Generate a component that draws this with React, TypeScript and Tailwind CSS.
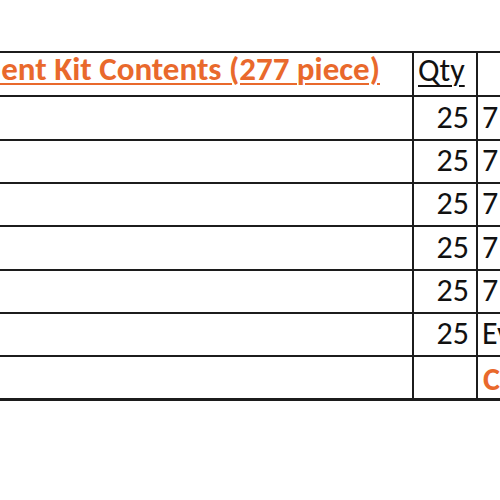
import React from 'react';

const rows = [
  { qty: '25', desc: '7', h: 'h-[44px]' },
  { qty: '25', desc: '7', h: 'h-[43px]' },
  { qty: '25', desc: '7', h: 'h-[43px]' },
  { qty: '25', desc: '7', h: 'h-[44px]' },
  { qty: '25', desc: '7', h: 'h-[43px]' },
  { qty: '25', desc: 'Ev', h: 'h-[43px]' },
];

const App = () => {
  return (
    <div className="w-[500px] h-[500px] bg-white overflow-hidden font-['Carlito','Lato',sans-serif] text-[32px] text-[#111]">
      <div className="mt-[51px] w-[560px] border-t-2 border-b-[3px] border-[#1c1c1c]">
        {/* header */}
        <div className="flex h-[44px] border-b-2 border-[#1c1c1c]">
          <div className="w-[414px] shrink-0 border-r-2 border-[#1c1c1c] flex items-end justify-end pr-[32px] pb-[9px] overflow-hidden">
            <span className="whitespace-nowrap text-[33px] font-bold text-[#e9692c] underline underline-offset-[3px] decoration-2 leading-none">
              Replacement Kit Contents (277 piece)
            </span>
          </div>
          <div className="w-[64px] shrink-0 border-r-2 border-[#1c1c1c] flex items-end pl-[4px] pb-[8px]">
            <span className="underline underline-offset-[4px] decoration-[1.5px] leading-none">Qty</span>
          </div>
          <div className="flex-1" />
        </div>

        {rows.map((row, i) => (
          <div key={i} className={`flex ${row.h} border-b-2 border-[#1c1c1c]`}>
            <div className="w-[414px] shrink-0 border-r-2 border-[#1c1c1c]" />
            <div className="w-[64px] shrink-0 border-r-2 border-[#1c1c1c] flex items-end justify-end pr-[7px] pb-[5px]">
              <span className="leading-none">{row.qty}</span>
            </div>
            <div className="flex-1 flex items-end pl-[4px] pb-[5px]">
              <span className="leading-none whitespace-nowrap">{row.desc}</span>
            </div>
          </div>
        ))}

        {/* last row */}
        <div className="flex h-[41px]">
          <div className="w-[414px] shrink-0 border-r-2 border-[#1c1c1c]" />
          <div className="w-[64px] shrink-0 border-r-2 border-[#1c1c1c]" />
          <div className="flex-1 flex items-end pl-[5px] pb-[2px]">
            <span className="leading-none font-bold text-[#e9692c]">C</span>
          </div>
        </div>
      </div>
    </div>
  );
};

export default App;
